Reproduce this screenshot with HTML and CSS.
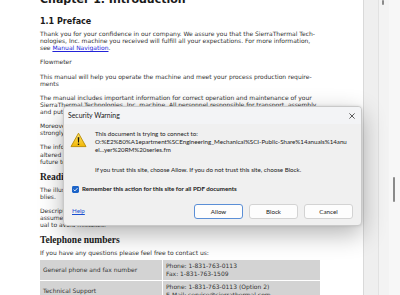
FILE: index.html
```html
<!DOCTYPE html>
<html lang="en">
<head>
    <meta charset="UTF-8">
    <meta name="viewport" content="width=device-width, initial-scale=1.0">
    <title>Security Warning</title>
    <link rel="stylesheet" href="styles.css">
</head>
<body>
    <div class="viewer">
        <div class="page">
            <div class="doc">
                <h1 class="doc-title">Chapter 1. Introduction</h1>
                <h2 class="doc-section">1.1 Preface</h2>
                <p>Thank you for your confidence in our company. We assure you that the SierraThermal Tech-<br>nologies, Inc. machine you received will fulfill all your expectations. For more information,<br>see <a class="doc-link" href="#">Manual Navigation</a>.</p>
                <p>Flowmeter</p>
                <p>This manual will help you operate the machine and meet your process production require-<br>ments</p>
                <p>The manual includes important information for correct operation and maintenance of your<br>SierraThermal Technologies, Inc. machine. All personnel responsible for transport, assembly<br>and putting into operation of the machine must read this manual carefully.</p>
                <p>Moreover, SierraThermal Technologies, Inc. recommends that the personnel is trained and<br>strongly advises to keep this manual close to the machine at all times.</p>
                <p>The information contained in this manual is subject to change without notice and may be<br>altered without prior notification to comply with<br>future technical developments.</p>
                <h3 class="doc-sub">Reading this Manual</h3>
                <p>The illustrations in this manual show the main components and subassem-<br>blies.</p>
                <p>Descriptions and illustrations of the machine refer to a standard version. Users should<br>assume that parts may differ. Please refer to the part list included with this man-<br>ual to avoid mistakes.</p>
                <h3 class="doc-sub">Telephone numbers</h3>
                <p class="lead">If you have any questions please feel free to contact us:</p>
                <table class="contacts">
                    <tr>
                        <td class="contacts-label">General phone and fax number</td>
                        <td>Phone: 1-831-763-0113<br>Fax: 1-831-763-1509</td>
                    </tr>
                    <tr>
                        <td class="contacts-label">Technical Support</td>
                        <td>Phone: 1-831-763-0113 (Option 2)<br>E-Mail: service@sierrathermal.com</td>
                    </tr>
                </table>
            </div>
        </div>
        <div class="rail">
            <div class="rail-pane"></div>
            <div class="rail-track"><span class="thumb thumb-top"></span></div>
            <div class="rail-track rail-outer"><span class="thumb thumb-mid"></span></div>
        </div>
    </div>

    <div class="dialog">
        <div class="dialog-head">
            <span class="dialog-title">Security Warning</span>
            <svg class="close-icon" width="6" height="6" viewBox="0 0 6 6">
                <path d="M0.4 0.4 L5.6 5.6 M5.6 0.4 L0.4 5.6" stroke="#333" stroke-width="0.8" fill="none"/>
            </svg>
        </div>
        <div class="dialog-body">
            <div class="dialog-main">
                <svg class="warn-icon" width="17" height="16" viewBox="0 0 17 16">
                    <defs>
                        <linearGradient id="warnFill" x1="0" y1="0" x2="0" y2="1">
                            <stop offset="0" stop-color="#fde46a"/>
                            <stop offset="1" stop-color="#f2b705"/>
                        </linearGradient>
                    </defs>
                    <path d="M8.5 1.2 L16 14.6 H1 Z" fill="url(#warnFill)" stroke="#b88a00" stroke-width="0.9" stroke-linejoin="round"/>
                    <path d="M7.7 5.2 H9.3 L9 10.6 H8 Z" fill="#111"/>
                    <rect x="7.8" y="11.6" width="1.4" height="1.4" fill="#111"/>
                </svg>
                <div class="message">
                    <div>This document is trying to connect to:</div>
                    <div>O:%E2%80%A1epartment%SCEngineering_Mechanical%SCI-Public-Share%14anuals%14anu</div>
                    <div>el...yer%20RM%20series.fm</div>
                    <div class="message-hint">If you trust this site, choose Allow. If you do not trust this site, choose Block.</div>
                </div>
            </div>
            <label class="remember">
                <svg class="check" width="7" height="7" viewBox="0 0 7 7">
                    <rect x="0" y="0" width="7" height="7" rx="1.4" fill="#1d64c8"/>
                    <path d="M1.6 3.6 L2.9 4.9 L5.5 2.1" stroke="#fff" stroke-width="0.9" fill="none"/>
                </svg>
                <span>Remember this action for this site for all PDF documents</span>
            </label>
            <div class="dialog-foot">
                <a class="help-link" href="#">Help</a>
                <div class="buttons">
                    <button class="btn btn-default">Allow</button>
                    <button class="btn">Block</button>
                    <button class="btn">Cancel</button>
                </div>
            </div>
        </div>
    </div>
</body>
</html>
```

FILE: styles.css
```css
:root {
    --doc-text: #333;
    --doc-head: #1a1a1a;
    --cell-bg: #d3d3d3;
    --dlg-bg: #f0f0f0;
    --dlg-head: #f3f4f6;
    --dlg-text: #1a1a1a;
    --link-blue: #1a4fd0;
}

body {
    margin: 0;
    padding: 0;
    width: 400px;
    height: 295px;
    overflow: hidden;
    position: relative;
    background-color: #fff;
}

.viewer {
    display: flex;
    height: 100%;
}

.page {
    flex: 0 0 363px;
    height: 100%;
    overflow: hidden;
    background-color: #fff;
}

.doc {
    margin-top: -7px;
    padding-left: 40px;
    font-family: 'DejaVu Sans', Verdana, sans-serif;
    font-size: 6px;
    line-height: 7.1px;
    color: var(--doc-text);
    white-space: nowrap;
}

.doc p {
    margin: 0 0 7.1px;
}

.doc .lead {
    margin-bottom: 4.2px;
}

.doc-title {
    font-size: 11px;
    line-height: 14px;
    font-weight: 700;
    color: var(--doc-head);
    margin: 0 0 10.2px;
}

.doc-section {
    font-size: 8px;
    line-height: 10px;
    font-weight: 700;
    color: var(--doc-head);
    margin: 0 0 2.8px;
}

.doc-sub {
    font-family: 'Liberation Serif', 'DejaVu Serif', serif;
    font-size: 9.5px;
    line-height: 10px;
    font-weight: 700;
    color: var(--doc-head);
    margin: 0 0 3.7px;
}

.doc-link {
    color: #2323d8;
    text-decoration: underline;
}

.contacts {
    border-collapse: collapse;
    width: 281px;
}

.contacts td {
    background-color: var(--cell-bg);
    border: 1px solid #fff;
    padding: 2.3px 3px;
    line-height: 7.7px;
    vertical-align: middle;
}

.contacts tr:first-child td {
    border-top: none;
}

.contacts td:first-child {
    border-left: none;
}

.contacts-label {
    width: 116px;
    padding-left: 4px;
}

/* right side: viewer pane + scrollbars */
.rail {
    flex: 1;
    display: flex;
    background-color: #efefef;
    border-left: 1px solid #d9d9d9;
}

.rail-pane {
    width: 14px;
}

.rail-track {
    width: 10px;
    border-left: 1px solid #e2e2e2;
    background-color: #f3f3f3;
    display: flex;
    justify-content: center;
}

.rail-outer {
    flex: 1;
    border-left: none;
    background-color: #f7f7f7;
}

.thumb {
    display: block;
    width: 2.5px;
    background-color: #8a8a8a;
    border-radius: 2px;
}

.thumb-top {
    height: 5px;
    margin-left: -2px;
}

.thumb-mid {
    height: 25px;
    margin-top: 177px;
    margin-left: -1px;
}

/* dialog */
.dialog {
    position: absolute;
    left: 63px;
    top: 106px;
    width: 299px;
    box-sizing: border-box;
    background-color: var(--dlg-bg);
    border: 1px solid #c9c9c9;
    border-radius: 4px;
    box-shadow: 0 8px 24px rgba(0, 0, 0, 0.3), 0 0 3px rgba(0, 0, 0, 0.12);
    font-family: Lato, 'Noto Sans', sans-serif;
    font-size: 6.2px;
    line-height: 8.2px;
    color: var(--dlg-text);
    overflow: hidden;
}

.dialog-head {
    height: 17px;
    display: flex;
    align-items: center;
    justify-content: space-between;
    padding: 0 6px 0 4px;
    background-color: var(--dlg-head);
    font-size: 6.9px;
}

.dialog-body {
    padding: 6px 8px 6px 8px;
}

.dialog-main {
    display: flex;
    align-items: flex-start;
}

.warn-icon {
    flex: 0 0 auto;
    margin: 2px 0 0 -2px;
}

.message {
    margin-left: 8px;
    white-space: nowrap;
}

.message-hint {
    margin-top: 11.5px;
}

.remember {
    display: flex;
    align-items: center;
    gap: 3px;
    margin-top: 11.1px;
    font-weight: 700;
}

.check {
    flex: 0 0 auto;
}

.dialog-foot {
    display: flex;
    align-items: center;
    justify-content: space-between;
    margin-top: 10.4px;
}

.help-link {
    color: var(--link-blue);
    text-decoration: underline;
}

.buttons {
    display: flex;
    gap: 6px;
}

.btn {
    width: 49px;
    height: 15px;
    padding: 0;
    background-color: #fdfdfd;
    border: 1px solid #d3d3d3;
    border-radius: 3px;
    font-family: Lato, 'Noto Sans', sans-serif;
    font-size: 6.2px;
    color: var(--dlg-text);
}

.btn-default {
    border-color: #5b8fd6;
}
```
